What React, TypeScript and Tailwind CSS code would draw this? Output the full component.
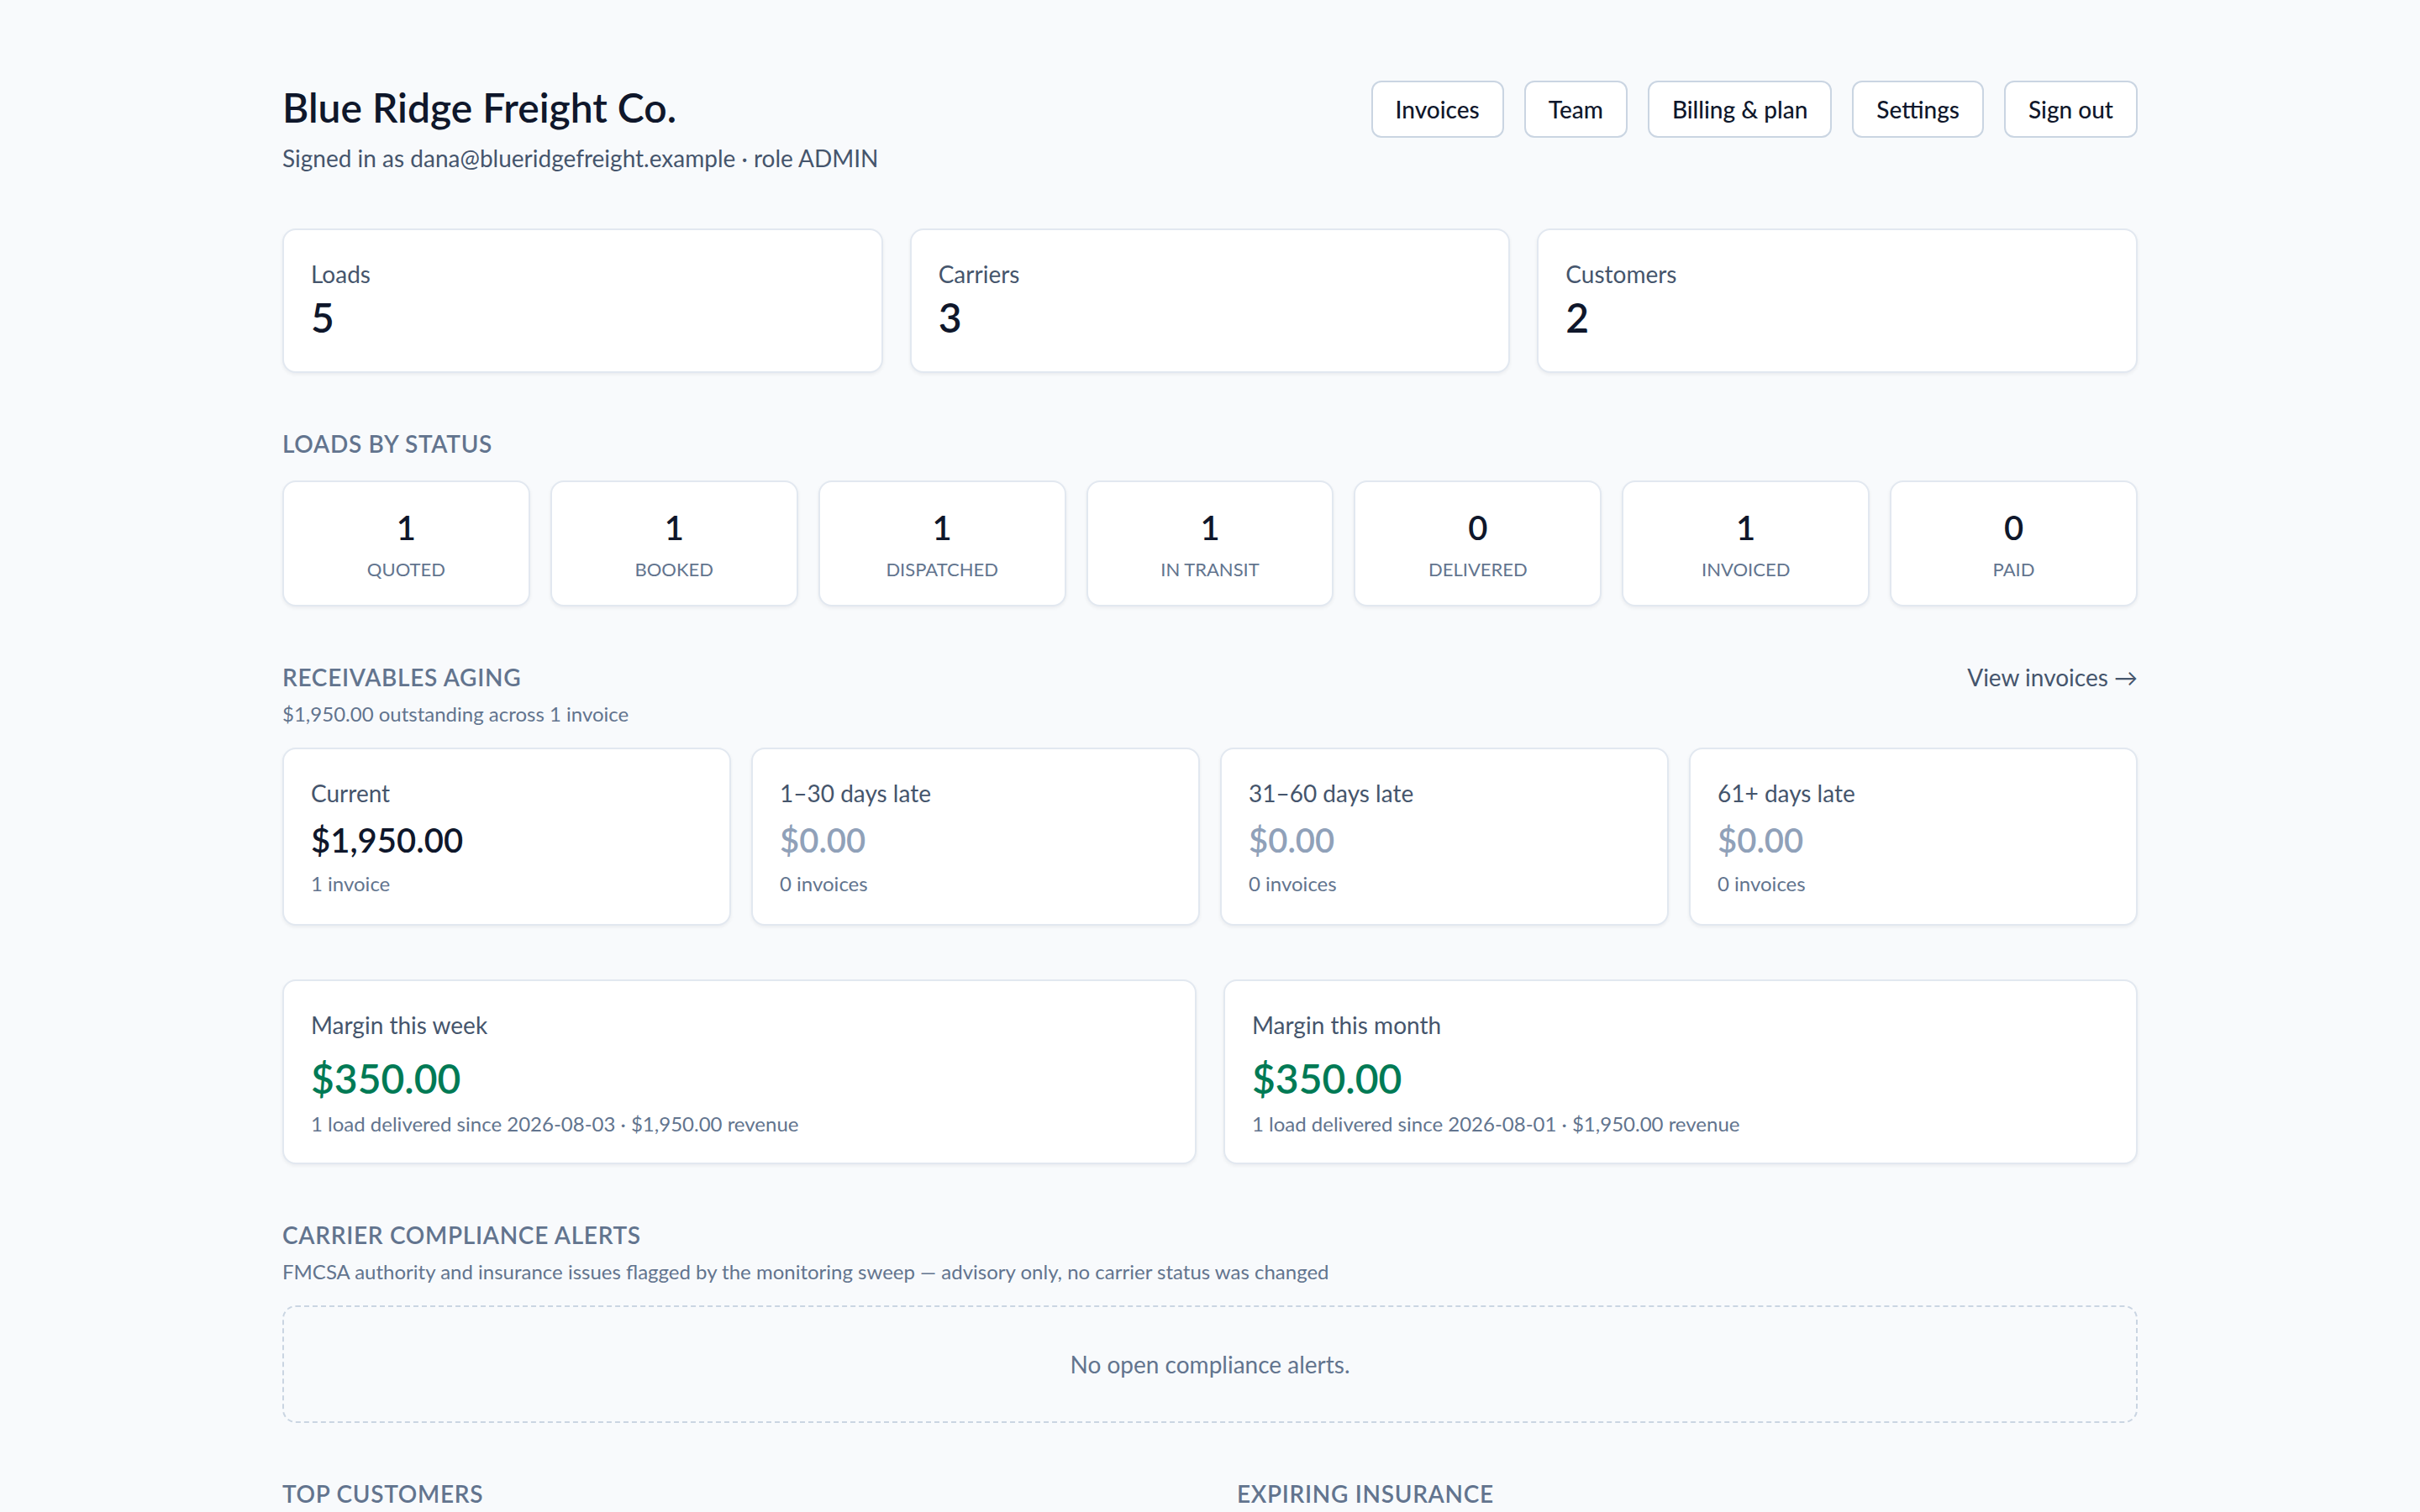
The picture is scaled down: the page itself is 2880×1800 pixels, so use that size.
import React from "react";

const card =
  "rounded-2xl border-2 border-slate-200 bg-white shadow-[0_2px_4px_0_rgba(15,23,42,0.06)]";

function SectionTitle({ children }: { children: React.ReactNode }) {
  return (
    <h2 className="text-[28px] leading-[40px] font-semibold uppercase tracking-wide text-slate-500">
      {children}
    </h2>
  );
}

export default function App() {
  const stats = [
    { label: "Loads", value: "5" },
    { label: "Carriers", value: "3" },
    { label: "Customers", value: "2" },
  ];
  const statuses = [
    ["1", "Quoted"],
    ["1", "Booked"],
    ["1", "Dispatched"],
    ["1", "In transit"],
    ["0", "Delivered"],
    ["1", "Invoiced"],
    ["0", "Paid"],
  ];
  const aging = [
    { label: "Current", amount: "$1,950.00", count: "1 invoice", zero: false },
    { label: "1–30 days late", amount: "$0.00", count: "0 invoices", zero: true },
    { label: "31–60 days late", amount: "$0.00", count: "0 invoices", zero: true },
    { label: "61+ days late", amount: "$0.00", count: "0 invoices", zero: true },
  ];
  return (
    <div className="min-h-screen bg-slate-50 font-['Lato','Noto_Sans',sans-serif] text-slate-900">
      <div className="mx-auto max-w-[2304px] px-12 py-24">
        <header className="flex items-start justify-between">
          <div>
            <h1 className="text-[48px] leading-[64px] font-semibold text-slate-900">Blue Ridge Freight Co.</h1>
            <p className="mt-2 text-[28px] leading-[40px] text-slate-600">
              Signed in as dana@blueridgefreight.example · role ADMIN
            </p>
          </div>
          <nav className="flex gap-6">
            {["Invoices", "Team", "Billing & plan", "Settings", "Sign out"].map((b) => (
              <button
                key={b}
                className="rounded-xl border-2 border-slate-300 bg-white px-[27px] py-3 text-[28px] leading-[40px] font-medium text-slate-900"
              >
                {b}
              </button>
            ))}
          </nav>
        </header>

        <div className="mt-16 grid grid-cols-3 gap-8">
          {stats.map((s) => (
            <div key={s.label} className={`${card} p-8`}>
              <div className="text-[28px] leading-[40px] text-slate-600">{s.label}</div>
              <div className="text-[48px] leading-[64px] font-semibold text-slate-900">{s.value}</div>
            </div>
          ))}
        </div>

        <section className="mt-16">
          <SectionTitle>Loads by status</SectionTitle>
          <div className="mt-6 grid grid-cols-7 gap-6">
            {statuses.map(([n, l]) => (
              <div key={l} className={`${card} py-[26px] text-center`}>
                <div className="text-[40px] leading-[56px] font-semibold text-slate-900">{n}</div>
                <div className="mt-1.5 text-[22px] leading-[32px] uppercase text-slate-500">{l}</div>
              </div>
            ))}
          </div>
        </section>

        <section className="mt-16">
          <div className="flex items-start justify-between">
            <div>
              <SectionTitle>Receivables aging</SectionTitle>
              <p className="mt-2 text-[24px] leading-[32px] text-slate-500">$1,950.00 outstanding across 1 invoice</p>
            </div>
            <a className="text-[28px] leading-[40px] text-slate-600">View invoices →</a>
          </div>
          <div className="mt-6 grid grid-cols-4 gap-6">
            {aging.map((a) => (
              <div key={a.label} className={`${card} p-8`}>
                <div className="text-[28px] leading-[40px] text-slate-600">{a.label}</div>
                <div
                  className={`mt-2 text-[40px] leading-[56px] font-semibold ${
                    a.zero ? "text-slate-400" : "text-slate-900"
                  }`}
                >
                  {a.amount}
                </div>
                <div className="mt-2 text-[24px] leading-[32px] text-slate-500">{a.count}</div>
              </div>
            ))}
          </div>
        </section>

        <div className="mt-16 grid grid-cols-2 gap-8">
          {[
            ["Margin this week", "1 load delivered since 2026-08-03 · $1,950.00 revenue"],
            ["Margin this month", "1 load delivered since 2026-08-01 · $1,950.00 revenue"],
          ].map(([t, s]) => (
            <div key={t} className={`${card} px-8 pt-8 pb-[30px]`}>
              <div className="text-[28px] leading-[40px] text-slate-600">{t}</div>
              <div className="mt-3 text-[48px] leading-[64px] font-semibold text-emerald-700">$350.00</div>
              <div className="mt-1.5 text-[24px] leading-[32px] text-slate-500">{s}</div>
            </div>
          ))}
        </div>

        <section className="mt-16">
          <SectionTitle>Carrier compliance alerts</SectionTitle>
          <p className="mt-2 text-[24px] leading-[32px] text-slate-500">
            FMCSA authority and insurance issues flagged by the monitoring sweep — advisory only, no carrier status was
            changed
          </p>
          <div className="mt-6 rounded-2xl border-2 border-dashed border-slate-300 p-12 text-center text-[28px] leading-[40px] text-slate-500">
            No open compliance alerts.
          </div>
        </section>

        <div className="mt-16 grid grid-cols-2 gap-16">
          <section>
            <SectionTitle>Top customers</SectionTitle>
          </section>
          <section>
            <SectionTitle>Expiring insurance</SectionTitle>
          </section>
        </div>
      </div>
    </div>
  );
}
